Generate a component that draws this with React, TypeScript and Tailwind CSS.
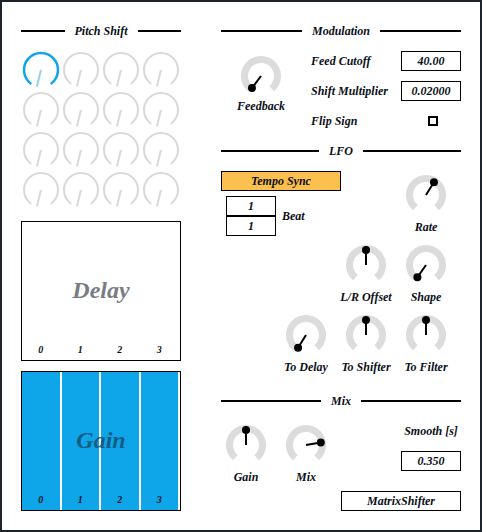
import React from 'react';

const pt = (cx: number, cy: number, r: number, a: number) => {
  const rad = (a * Math.PI) / 180;
  return [cx + r * Math.sin(rad), cy - r * Math.cos(rad)];
};

const arcPath = (r: number, from: number, to: number) => {
  const [x1, y1] = pt(20, 20, r, from);
  const [x2, y2] = pt(20, 20, r, to);
  return `M ${x1} ${y1} A ${r} ${r} 0 1 1 ${x2} ${y2}`;
};

// big knob: thick gray arc, black pointer with a dot
const Knob: React.FC<{ label: string; angle: number; className?: string; labelGap?: string }> = ({ label, angle, className, labelGap }) => {
  const [dx, dy] = pt(20, 20, 15, angle);
  return (
    <div className={`flex w-[60px] flex-col items-center ${className ?? ''}`}>
      <svg width={40} height={40} viewBox="0 0 40 40">
        <path d={arcPath(16.5, -140, 140)} fill="none" stroke="#dcdcdc" strokeWidth={7} />
        <line x1={20} y1={20} x2={dx} y2={dy} stroke="#000" strokeWidth={2} />
        <circle cx={dx} cy={dy} r={4} fill="#000" />
      </svg>
      <span className={`${labelGap ?? 'mt-1'} whitespace-nowrap text-[12px] leading-4`}>{label}</span>
    </div>
  );
};

// small outline knob for the pitch shift matrix
const PitchKnob: React.FC<{ active?: boolean }> = ({ active }) => {
  const [dx, dy] = pt(20, 20, 17, -166);
  return (
    <div className="flex h-[40px] w-[40px] items-center justify-center">
      <svg width={40} height={40} viewBox="0 0 40 40">
        <path d={arcPath(17, -145, 145)} fill="none" stroke={active ? '#0ea5e9' : '#d9d9d9'} strokeWidth={active ? 2.5 : 2} />
        <line x1={20} y1={20} x2={dx} y2={dy} stroke={active ? '#9ccfeb' : '#d9d9d9'} strokeWidth={2} />
      </svg>
    </div>
  );
};

const Header: React.FC<{ title: string; className?: string }> = ({ title, className }) => (
  <div className={`flex h-5 items-center gap-[10px] ${className ?? ''}`}>
    <div className="h-[2px] flex-1 bg-black" />
    <span className="text-[12px] leading-5">{title}</span>
    <div className="h-[2px] flex-1 bg-black" />
  </div>
);

const ValueBox: React.FC<{ value: string; className?: string }> = ({ value, className }) => (
  <div className={`flex h-5 items-center justify-center border border-black text-[12px] ${className ?? ''}`}>{value}</div>
);

export default function App() {
  return (
    <div className="h-[532px] w-[482px] border-2 border-[#1d232a] bg-white pl-[19px] pt-[19px] font-['Liberation_Serif',serif] font-bold italic text-[#0b0f19]">
      <div className="flex gap-[40px]">
        {/* Left column */}
        <div className="w-[160px]">
          <Header title="Pitch Shift" />
          <div className="mt-[9px] grid grid-cols-4">
            {Array.from({ length: 16 }).map((_, i) => (
              <PitchKnob key={i} active={i === 0} />
            ))}
          </div>

          {/* Delay */}
          <div className="relative mt-[11px] flex h-[140px] border border-black">
            {[0, 1, 2, 3].map(n => (
              <div key={n} className="flex flex-1 items-end justify-center pb-[4px] pr-[2px]">
                <span className="text-[10px] leading-3">{n}</span>
              </div>
            ))}
            <span className="absolute inset-0 flex items-center justify-center pb-[3px] text-[24px] text-[#787d84]">Delay</span>
          </div>

          {/* Gain */}
          <div className="relative mt-[10px] flex h-[140px] border border-black bg-[#0ea5e9]">
            {[0, 1, 2, 3].map(n => (
              <div key={n} className="flex flex-1 items-end justify-center border-r-2 border-white pb-[4px]">
                <span className="text-[10px] leading-3">{n}</span>
              </div>
            ))}
            <span className="absolute inset-0 flex items-center justify-center pb-[2px] text-[24px] text-[#145f86]">Gain</span>
          </div>
        </div>

        {/* Right column */}
        <div className="w-[240px]">
          <Header title="Modulation" />
          <div className="mt-[10px] flex h-[80px]">
            <div className="flex w-[80px] flex-col items-center pt-[5px]">
              <Knob label="Feedback" angle={-143} labelGap="mt-[2px]" />
            </div>
            <div className="ml-[10px] flex flex-1 flex-col gap-[10px] text-[12px]">
              <div className="flex h-5 items-center justify-between">
                <span>Feed Cutoff</span>
                <ValueBox value="40.00" className="w-[60px]" />
              </div>
              <div className="flex h-5 items-center justify-between">
                <span>Shift Multiplier</span>
                <ValueBox value="0.02000" className="w-[60px]" />
              </div>
              <div className="flex h-5 items-center justify-between">
                <span>Flip Sign</span>
                <div className="mr-[23px] h-[10px] w-[10px] border-2 border-black" />
              </div>
            </div>
          </div>

          <Header title="LFO" className="mt-[10px]" />
          <div className="mt-[10px]">
            <div className="flex justify-between">
              <div className="flex flex-col">
                <div className="flex h-5 w-[120px] items-center justify-center border border-black bg-[#fcc04f] text-[12px]">Tempo Sync</div>
                <div className="ml-[5px] mt-[5px] flex items-center">
                  <div className="flex w-[50px] flex-col">
                    <ValueBox value="1" />
                    <ValueBox value="1" />
                  </div>
                  <span className="ml-[6px] text-[12px]">Beat</span>
                </div>
              </div>
              <Knob label="Rate" angle={32} className="mr-[5px] mt-1" />
            </div>
            <div className="mt-[9px] flex justify-end pr-[5px]">
              <Knob label="L/R Offset" angle={0} />
              <Knob label="Shape" angle={-145} />
            </div>
            <div className="mt-[10px] flex justify-end pr-[5px]">
              <Knob label="To Delay" angle={-148} />
              <Knob label="To Shifter" angle={0} />
              <Knob label="To Filter" angle={0} />
            </div>
          </div>

          <Header title="Mix" className="mt-[16px]" />
          <div className="mt-[10px]">
            <div className="flex">
              <Knob label="Gain" angle={0} className="ml-[-5px] mt-1" />
              <Knob label="Mix" angle={80} className="mt-1" />
              <div className="ml-auto flex w-[60px] flex-col items-center">
                <span className="whitespace-nowrap text-[12px] leading-5">Smooth [s]</span>
                <ValueBox value="0.350" className="mt-[10px] w-[60px]" />
              </div>
            </div>
            <div className="mt-[6px] flex justify-end">
              <ValueBox value="MatrixShifter" className="w-[120px]" />
            </div>
          </div>
        </div>
      </div>
    </div>
  );
}
